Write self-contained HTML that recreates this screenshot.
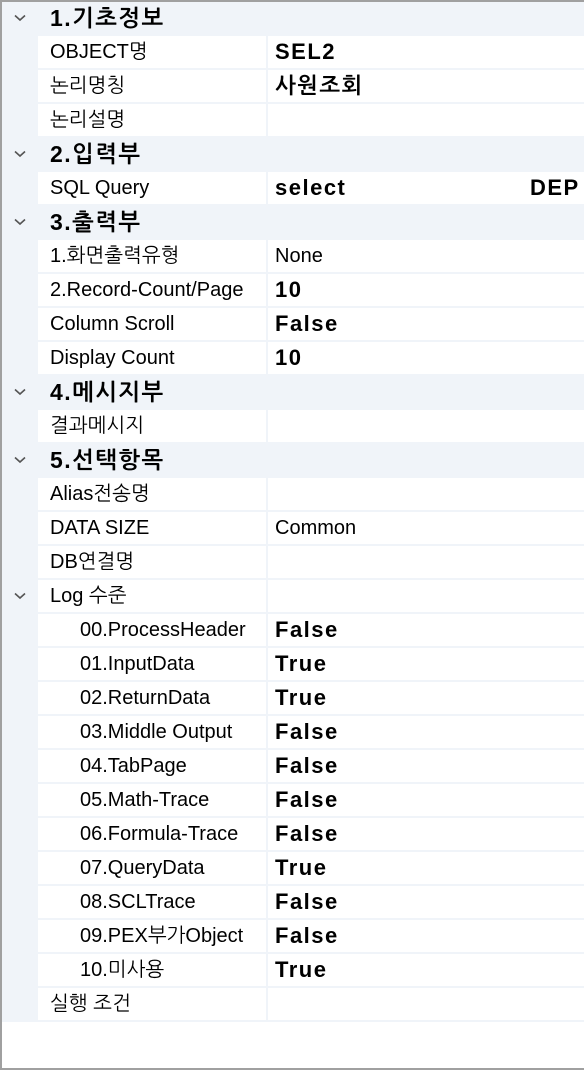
<!DOCTYPE html>
<html><head><meta charset="utf-8"><style>
*{margin:0;padding:0;box-sizing:border-box}
body{width:584px;height:1070px;background:#fff;font-family:"Liberation Sans","NanumGothic","Noto Sans CJK KR",sans-serif;overflow:hidden;position:relative}
.frame{position:absolute;left:0;top:0;width:584px;height:1070px;border:2px solid #a0a0a0;border-right:none;}
.grid{position:absolute;left:2px;top:2px;width:582px;background:#f0f4f9}
.row{height:34px;position:relative;font-size:20px;line-height:32px;color:#000}
.cat{background:#f0f4f9;font-weight:bold}
.cat span{position:absolute;left:48px;top:0;font-size:23px;letter-spacing:1.5px}
.chev{position:absolute;left:12px;top:12px;width:12px;height:8px}
.n{position:absolute;left:36px;top:0;width:228px;height:32px;background:#fff;padding-left:12px;white-space:nowrap;overflow:hidden}
.n.s{padding-left:42px}
.v{position:absolute;left:266px;top:0;right:0;height:32px;background:#fff;padding-left:7px;white-space:nowrap;overflow:hidden}
.b{font-weight:bold;font-size:22px;letter-spacing:1.5px}
</style></head><body>
<div class="grid">
<div class="row cat"><svg class="chev" viewBox="0 0 12 8"><path d="M1 1.5L6 6L11 1.5" stroke="#555" stroke-width="1.6" fill="none"/></svg><span>1.기초정보</span></div>
<div class="row"><div class="n">OBJECT명</div><div class="v b">SEL2</div></div>
<div class="row"><div class="n">논리명칭</div><div class="v b">사원조회</div></div>
<div class="row"><div class="n">논리설명</div><div class="v"></div></div>
<div class="row cat"><svg class="chev" viewBox="0 0 12 8"><path d="M1 1.5L6 6L11 1.5" stroke="#555" stroke-width="1.6" fill="none"/></svg><span>2.입력부</span></div>
<div class="row"><div class="n">SQL Query</div><div class="v b">select<span style="position:absolute;left:262px">DEP</span></div></div>
<div class="row cat"><svg class="chev" viewBox="0 0 12 8"><path d="M1 1.5L6 6L11 1.5" stroke="#555" stroke-width="1.6" fill="none"/></svg><span>3.출력부</span></div>
<div class="row"><div class="n">1.화면출력유형</div><div class="v">None</div></div>
<div class="row"><div class="n">2.Record-Count/Page</div><div class="v b">10</div></div>
<div class="row"><div class="n">Column Scroll</div><div class="v b">False</div></div>
<div class="row"><div class="n">Display Count</div><div class="v b">10</div></div>
<div class="row cat"><svg class="chev" viewBox="0 0 12 8"><path d="M1 1.5L6 6L11 1.5" stroke="#555" stroke-width="1.6" fill="none"/></svg><span>4.메시지부</span></div>
<div class="row"><div class="n">결과메시지</div><div class="v"></div></div>
<div class="row cat"><svg class="chev" viewBox="0 0 12 8"><path d="M1 1.5L6 6L11 1.5" stroke="#555" stroke-width="1.6" fill="none"/></svg><span>5.선택항목</span></div>
<div class="row"><div class="n">Alias전송명</div><div class="v"></div></div>
<div class="row"><div class="n">DATA SIZE</div><div class="v">Common</div></div>
<div class="row"><div class="n">DB연결명</div><div class="v"></div></div>
<div class="row"><svg class="chev" viewBox="0 0 12 8"><path d="M1 1.5L6 6L11 1.5" stroke="#555" stroke-width="1.6" fill="none"/></svg><div class="n">Log 수준</div><div class="v"></div></div>
<div class="row"><div class="n s">00.ProcessHeader</div><div class="v b">False</div></div>
<div class="row"><div class="n s">01.InputData</div><div class="v b">True</div></div>
<div class="row"><div class="n s">02.ReturnData</div><div class="v b">True</div></div>
<div class="row"><div class="n s">03.Middle Output</div><div class="v b">False</div></div>
<div class="row"><div class="n s">04.TabPage</div><div class="v b">False</div></div>
<div class="row"><div class="n s">05.Math-Trace</div><div class="v b">False</div></div>
<div class="row"><div class="n s">06.Formula-Trace</div><div class="v b">False</div></div>
<div class="row"><div class="n s">07.QueryData</div><div class="v b">True</div></div>
<div class="row"><div class="n s">08.SCLTrace</div><div class="v b">False</div></div>
<div class="row"><div class="n s">09.PEX부가Object</div><div class="v b">False</div></div>
<div class="row"><div class="n s">10.미사용</div><div class="v b">True</div></div>
<div class="row"><div class="n">실행 조건</div><div class="v"></div></div>
</div>
<div class="frame"></div>
</body></html>
